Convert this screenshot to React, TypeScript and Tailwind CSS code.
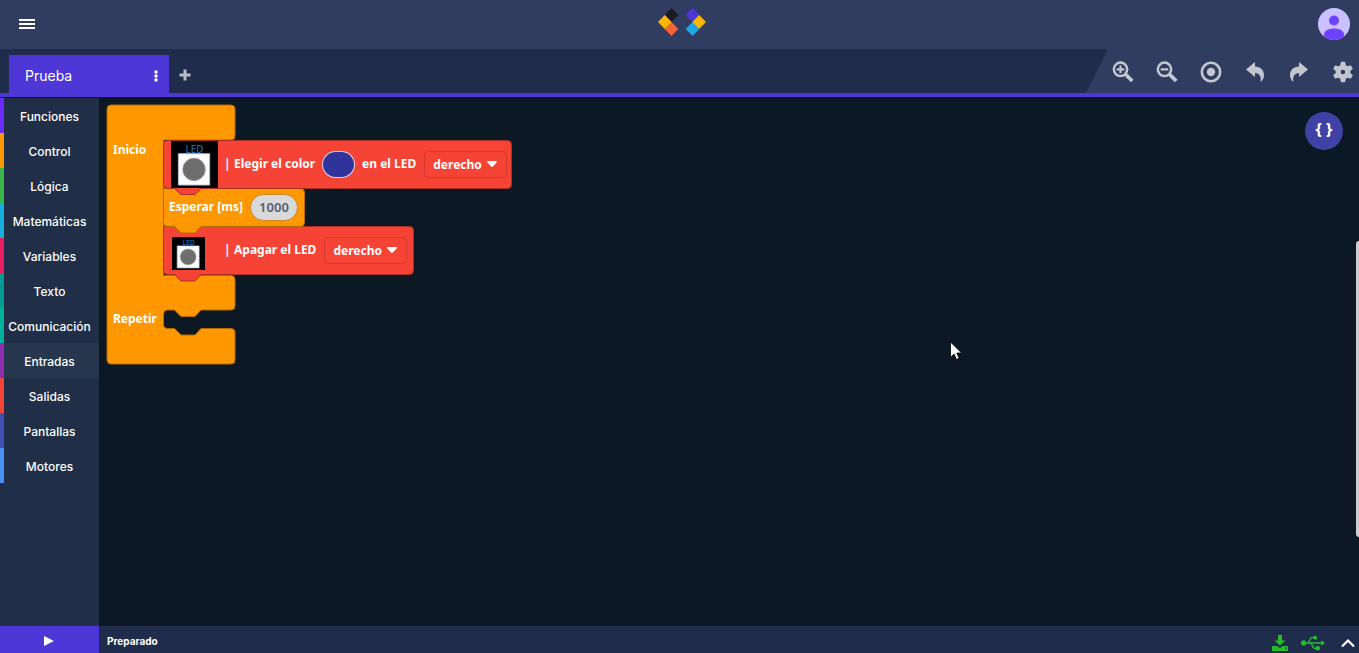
import type { ReactNode } from "react";
import { FaUsb } from "react-icons/fa";

const CATEGORIES = [
  { name: "Funciones", color: "bg-[#6a2cff]" },
  { name: "Control", color: "bg-[#ff9800]" },
  { name: "Lógica", color: "bg-[#3cb54a]" },
  { name: "Matemáticas", color: "bg-[#18b0dd]" },
  { name: "Variables", color: "bg-[#e91e63]" },
  { name: "Texto", color: "bg-[#009c92]" },
  { name: "Comunicación", color: "bg-[#00b09b]" },
  { name: "Entradas", color: "bg-[#8e2cb0]", active: true },
  { name: "Salidas", color: "bg-[#f54336]" },
  { name: "Pantallas", color: "bg-[#3f51b5]" },
  { name: "Motores", color: "bg-[#4a90f5]" },
];

function Logo() {
  return (
    <svg width="50" height="28" viewBox="0 0 50 28" aria-label="Logo">
      <path d="M14.500 0l6.800 7-6.800 7-6.800-7z" fill="#1c1b24" />
      <path d="M14.500 14l6.800 7-6.800 7-6.800-7z" fill="#f56336" />
      <path d="M7.800 7l6.800 7-6.800 7L1 14z" fill="#ffb600" />
      <path d="M35.500 0l6.800 7-6.800 7-6.800-7z" fill="#4e37d6" />
      <path d="M35.500 14l6.800 7-6.800 7-6.800-7z" fill="#1ba8e3" />
      <path d="M42.200 7l6.800 7-6.800 7-6.800-7z" fill="#ffb600" />
    </svg>
  );
}

function Tool({ label, children }: { label: string; children: ReactNode }) {
  return (
    <button aria-label={label} className="text-[#c3c5cf]">
      <svg width="22" height="22" viewBox="0 0 22 22" fill="none">
        {children}
      </svg>
    </button>
  );
}

const UNDO = "M2 8.500L11 1v4.600c5.600.2 9 3.600 9 8.600 0 2.800-1.300 5.200-3.400 6.800.8-4.800-.6-8.600-5.600-8.900V16z";

const GEAR_TEETH = [0, 60, 120];

function Led({ size }: { size: number }) {
  return (
    <svg width={size} height={size} viewBox="0 0 48 48" aria-label="LED">
      <path d="M0 0h48v48H0z" fill="#000" />
      <text x="24" y="12" textAnchor="middle" fontSize="10" fontWeight="500" fill="#2666a0">
        LED
      </text>
      <path d="M7.500 13h32v32h-32z" fill="#fff" stroke="#b8bdd0" />
      <circle cx="23.500" cy="29" r="11.500" fill="#6e6e6e" stroke="#9a9a9a" />
    </svg>
  );
}

function SideSelect({ label }: { label: string }) {
  return (
    <span className="relative flex items-center">
      <select
        aria-label={label}
        className="h-[27px] w-[83px] appearance-none rounded border border-[#d5382c] pt-px pl-2 font-bold text-white outline-none"
      >
        <option>derecho</option>
        <option>izquierdo</option>
      </select>
      <svg width="10" height="6" viewBox="0 0 10 6" className="pointer-events-none absolute right-[10px]">
        <path d="M1 0h8a1 1 0 0 1 .6 1.600L5.800 5.500a1 1 0 0 1-1.600 0L.4 1.600A1 1 0 0 1 1 0z" fill="#fff" />
      </svg>
    </span>
  );
}

// Outlines of the stacked blocks; the earlier ones are drawn last so that
// their tabs sit on top of the block below.
function BlockShapes() {
  return (
    <svg width="408" height="262" viewBox="0 0 408 262" className="absolute top-0 left-0">
      <path
        d="M1 5a4 4 0 0 1 4-4H125a4 4 0 0 1 4 4V32a4 4 0 0 1-4 4H57.500V171.500H125a4 4 0 0 1 4 4V202a4 4 0 0 1-4 4H95l-6 6.500H75L68.500 206H61.500a4 4 0 0 0-4 4V220.500a4 4 0 0 0 4 4H68.500L75 231H89l6-6.500H125a4 4 0 0 1 4 4V256a4 4 0 0 1-4 4H5a4 4 0 0 1-4-4z"
        fill="#ff9800"
        stroke="#b36b00"
      />
      <path
        d="M57.500 122.500H303.500a4 4 0 0 1 4 4V166.500a4 4 0 0 1-4 4H95l-6 6.500H75L68.500 170.500H61.500a4 4 0 0 1-4-4z"
        fill="#f54336"
        stroke="#ab2f26"
      />
      <path
        d="M57.500 84.500H194.500a4 4 0 0 1 4 4V118.500a4 4 0 0 1-4 4H95l-6 6.500H75L68.500 122.500H61.500a4 4 0 0 1-4-4z"
        fill="#ff9800"
        stroke="#b36b00"
      />
      <path
        d="M61.500 36.500H401.500a4 4 0 0 1 4 4V80.500a4 4 0 0 1-4 4H95l-6 6H75L68.500 84.500H61.500a4 4 0 0 1-4-4V40.500a4 4 0 0 1 4-4z"
        fill="#f54336"
        stroke="#ab2f26"
      />
    </svg>
  );
}

function Program() {
  return (
    <div className="absolute top-[7px] left-[7px] font-['Noto_Sans',sans-serif] text-xs font-bold whitespace-nowrap text-white">
      <BlockShapes />
      <div className="relative grid grid-cols-[57px_auto] pt-9">
        <span className="pl-[7px] leading-5">Inicio</span>
        <div>
          <div className="flex h-12 items-center pl-2">
            <Led size={47} />
            <span className="ml-[6px] w-[10px]">|</span>
            <span>Elegir el color</span>
            <button
              aria-label="Color"
              className="mx-[7px] h-[27px] w-[33px] rounded-full border border-white/80 bg-[#303399]"
            />
            <span className="mr-2">en el LED</span>
            <SideSelect label="LED a encender" />
          </div>
          <div className="flex h-[38px] items-center pl-[6px]">
            <label htmlFor="wait" className="mr-[7px]">Esperar [ms]</label>
            <input
              id="wait"
              defaultValue="1000"
              className="h-[27px] w-12 rounded-full border border-[#c98a2c] bg-[#d9d9d9] text-center text-[13px] font-semibold text-[#575e75] outline-none"
            />
          </div>
          <div className="flex h-12 items-center pl-[9px]">
            <span className="pt-[6px]">
              <Led size={33} />
            </span>
            <span className="ml-[19px] w-[10px]">|</span>
            <span className="mr-2">Apagar el LED</span>
            <SideSelect label="LED a apagar" />
          </div>
        </div>
        <span className="mt-[35px] pl-[7px] leading-5">Repetir</span>
      </div>
    </div>
  );
}

export default function App() {
  return (
    <div className="flex h-screen flex-col overflow-hidden bg-[#0c1823] font-['Inter',sans-serif] text-white">
      <header className="flex h-[49px] shrink-0 items-center justify-between bg-[#313d60] pr-[9px] pb-[2px] pl-[19px]">
        <button aria-label="Menú" className="w-[26px]">
          <svg width="16" height="10" viewBox="0 0 16 10">
            <path d="M0 0h16v2H0zM0 4h16v2H0zM0 8h16v2H0z" fill="#fff" />
          </svg>
        </button>
        <span className="pb-1">
          <Logo />
        </span>
        <button aria-label="Cuenta" className="overflow-hidden rounded-full bg-[#cbc0ff]">
          <svg width="32" height="32" viewBox="0 0 32 32">
            <circle cx="16" cy="12.500" r="5" fill="#6c44ff" />
            <path d="M6 32v-5.500C6 22.500 11 20.500 16 20.500s10 2 10 6V32z" fill="#6c44ff" />
          </svg>
        </button>
      </header>

      <div className="flex h-12 shrink-0 items-end border-b-4 border-[#4e37d6] bg-[#202c4b] pl-[9px]">
        <div className="flex h-[38px] w-40 items-center justify-between bg-[#4e37d6] pt-[3px] pr-[10px] pl-4">
          <button className="text-sm leading-5">Prueba</button>
          <button aria-label="Opciones">
            <svg width="6" height="12" viewBox="0 0 6 12" fill="#fff">
              <circle cx="3" cy="2" r="1.700" />
              <circle cx="3" cy="6" r="1.700" />
              <circle cx="3" cy="10" r="1.700" />
            </svg>
          </button>
        </div>
        <button aria-label="Nueva pestaña" className="flex h-[38px] w-8 items-center justify-center pt-[2px]">
          <svg width="12" height="12" viewBox="0 0 12 12">
            <path d="M6 .5v11M.5 6h11" stroke="#b9bcc8" strokeWidth="3" />
          </svg>
        </button>
        <div className="ml-auto flex h-11 items-center gap-[22px] bg-[#313d60] pt-[2px] pr-[5px] pl-[26px] [clip-path:polygon(22px_0,100%_0,100%_100%,0_100%)]">
          <Tool label="Acercar">
            <circle cx="8.500" cy="8.300" r="6.700" stroke="currentColor" strokeWidth="2.500" />
            <path d="M8.500 4.500v7.600M4.700 8.300h7.600" stroke="currentColor" strokeWidth="2.200" />
            <path d="M13.500 13.300L20.300 20" stroke="currentColor" strokeWidth="3.800" />
          </Tool>
          <Tool label="Alejar">
            <circle cx="8.500" cy="8.300" r="6.700" stroke="currentColor" strokeWidth="2.500" />
            <path d="M4.700 8.300h7.600" stroke="currentColor" strokeWidth="2.200" />
            <path d="M13.500 13.300L20.300 20" stroke="currentColor" strokeWidth="3.800" />
          </Tool>
          <Tool label="Centrar">
            <circle cx="11" cy="11" r="9.200" stroke="currentColor" strokeWidth="2.600" />
            <circle cx="11" cy="11" r="4.200" fill="currentColor" />
          </Tool>
          <Tool label="Deshacer">
            <path d={UNDO} fill="currentColor" />
          </Tool>
          <Tool label="Rehacer">
            <path d={UNDO} fill="currentColor" transform="matrix(-1 0 0 1 22 0)" />
          </Tool>
          <Tool label="Ajustes">
            {GEAR_TEETH.map((a) => (
              <path key={a} d="M9 .8h4l.9 4H8.100zM9 21.200h4l.9-4H8.100z" fill="currentColor" transform={`rotate(${a} 11 11)`} />
            ))}
            <circle cx="11" cy="11" r="4.800" stroke="currentColor" strokeWidth="5" />
          </Tool>
        </div>
      </div>

      <div className="flex min-h-0 flex-1">
        <nav className="w-[99px] shrink-0 border-t border-[#0c1823] bg-[#202e47]">
          {CATEGORIES.map((c) => (
            <button key={c.name} className={`flex h-[35px] w-full text-xs font-medium ${c.active ? "bg-[#26374d]" : ""}`}>
              <span className={`h-full w-1 shrink-0 ${c.color}`} />
              <span className="-ml-1 flex h-full flex-1 items-center justify-center pt-[3px]">{c.name}</span>
            </button>
          ))}
        </nav>

        <main className="relative min-w-0 flex-1 overflow-hidden">
          <Program />
          <button
            aria-label="Ver código"
            className="absolute top-[15px] right-4 size-[38px] rounded-full bg-[#3f41a5] pb-1 font-['Noto_Sans',sans-serif] text-base leading-5 font-bold"
          >
            {"{ }"}
          </button>
          <div className="absolute top-[27.2%] right-0 h-[56%] w-[3px] rounded-l bg-[#cfcdd0]" />
          <svg width="12" height="19" viewBox="0 0 12 19" className="absolute top-[244px] left-[851px]">
            <path d="M.5 1v15.500l3.600-3.400 2.400 5.400 2.700-1.200-2.400-5.300h4.800z" fill="#fff" stroke="#000" strokeWidth=".8" />
          </svg>
        </main>
      </div>

      <footer className="flex h-[27px] shrink-0 bg-[#202c4b]">
        <button aria-label="Ejecutar" className="flex w-[99px] items-center justify-center bg-[#4e37d6] pt-[2px]">
          <svg width="11" height="10" viewBox="0 0 11 10">
            <path d="M0 0l10 5-10 5z" fill="#fff" />
          </svg>
        </button>
        <p className="pt-[7px] pl-2 text-[10px] leading-4 font-bold">Preparado</p>
        <div className="ml-auto flex items-center gap-3 pt-[6px] pr-1">
          <button aria-label="Descargar">
            <svg width="18" height="16" viewBox="0 0 18 16" fill="#1fc02a">
              <path d="M7 0h4v5.500h3.500L9 10.500 3.500 5.500H7z" />
              <path d="M1 11h5l3 2 3-2h5v5H1zM14 12.500v1.200h1.500v-1.200z" fillRule="evenodd" />
            </svg>
          </button>
          <button aria-label="Puerto USB">
            <FaUsb size={24} color="#1fc02a" />
          </button>
          <button aria-label="Desplegar" className="pl-1">
            <svg width="14" height="10" viewBox="0 0 14 10" fill="none">
              <path d="M1 8.500l6-6 6 6" stroke="#fff" strokeWidth="2.200" />
            </svg>
          </button>
        </div>
      </footer>
    </div>
  );
}
